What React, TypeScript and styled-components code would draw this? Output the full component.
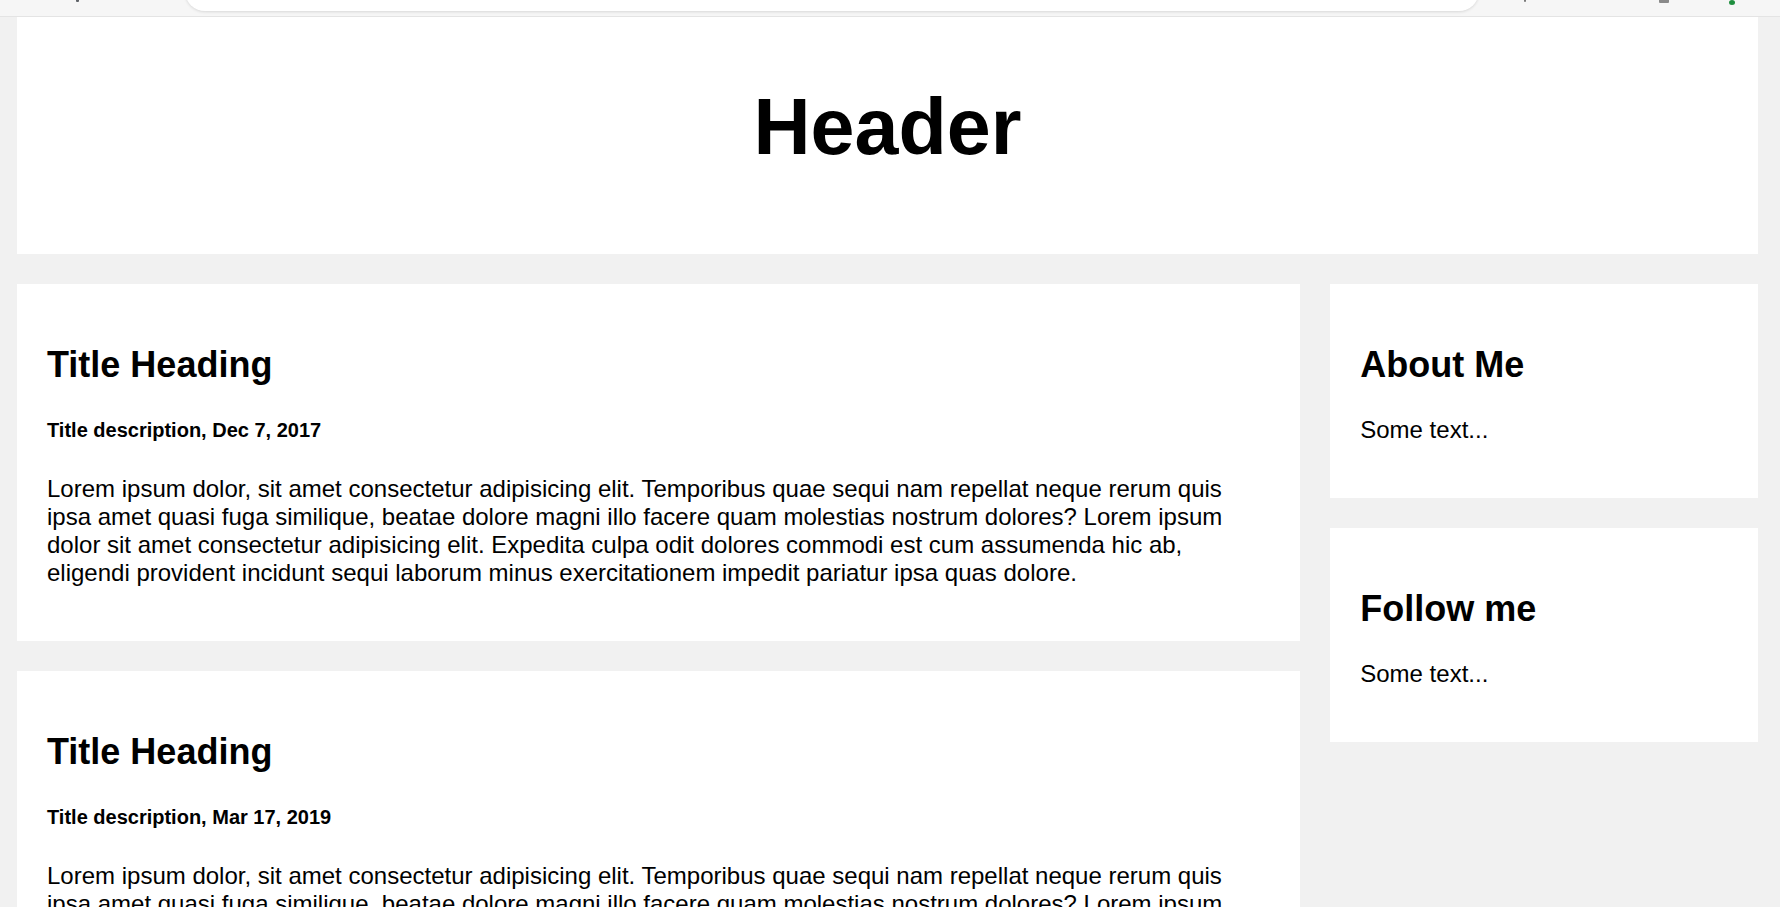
import React from "react";
import styled, { createGlobalStyle } from "styled-components";

const GlobalStyle = createGlobalStyle`
  html, body {
    margin: 0;
    padding: 0;
    background: #f1f1f1;
    font-family: "Liberation Sans", Arial, Helvetica, sans-serif;
    font-size: 24px;
    color: #000;
  }
  * { box-sizing: border-box; }
`;

const BrowserStrip = styled.div`
  height: 17px;
  background: #f6f6f6;
  border-bottom: 1px solid #e4e4e4;
  overflow: hidden;
  display: flex;
  align-items: flex-end;
  padding: 0 0 5px 0;
`;

const Mark = styled.span<{ $w: number; $h: number; $color: string; $left: number; $round?: boolean }>`
  flex: none;
  align-self: flex-start;
  width: ${(p) => p.$w}px;
  height: ${(p) => p.$h}px;
  margin-left: ${(p) => p.$left}px;
  background: ${(p) => p.$color};
  border-radius: ${(p) => (p.$round ? "50%" : "0 0 1px 1px")};
`;

const AddressBar = styled.div`
  flex: none;
  width: 1294px;
  height: 40px;
  margin-left: 106px;
  background: #fff;
  border-radius: 20px;
  box-shadow: 0 1px 3px rgba(0, 0, 0, 0.12);
  display: flex;
  align-items: flex-end;
  padding: 0 0 7px 10px;
`;

const Page = styled.div`
  padding: 0 22px 0 17px;
`;

const Header = styled.header`
  background: #fff;
  text-align: center;
  padding: 64px 20px 81px;
`;

const HeaderTitle = styled.h1`
  margin: 0;
  font-size: 79px;
  font-weight: 700;
  line-height: normal;
`;

const Row = styled.div`
  display: grid;
  grid-template-columns: 3fr 1fr;
  column-gap: 30px;
  align-items: start;
  margin-top: 30px;
`;

const Column = styled.div`
  display: flex;
  flex-direction: column;
  gap: 30px;
`;

const Card = styled.section`
  background: #fff;
  padding: 30px;
  display: flow-root;
`;

const CardTitle = styled.h2`
  font-size: 36px;
  font-weight: 700;
  margin: 30px 0;
  line-height: normal;
`;

const CardMeta = styled.h5`
  font-size: 20px;
  font-weight: 700;
  margin: 33px 0;
  line-height: normal;
`;

const CardText = styled.p`
  margin: 24px 0;
  font-size: 24px;
  line-height: normal;
`;

const LOREM =
  "Lorem ipsum dolor, sit amet consectetur adipisicing elit. Temporibus quae sequi nam repellat neque rerum quis ipsa amet quasi fuga similique, beatae dolore magni illo facere quam molestias nostrum dolores? Lorem ipsum dolor sit amet consectetur adipisicing elit. Expedita culpa odit dolores commodi est cum assumenda hic ab, eligendi provident incidunt sequi laborum minus exercitationem impedit pariatur ipsa quas dolore.";

const posts = [
  { title: "Title Heading", meta: "Title description, Dec 7, 2017", text: LOREM },
  { title: "Title Heading", meta: "Title description, Mar 17, 2019", text: LOREM },
];

const side = [
  { title: "About Me", text: "Some text..." },
  { title: "Follow me", text: "Some text..." },
];

export default function App() {
  return (
    <>
      <GlobalStyle />
      <BrowserStrip>
        <Mark $w={3} $h={2} $color="#5f6368" $left={76} />
        <AddressBar>
          <Mark $w={3} $h={2} $color="#9aa0a6" $left={0} />
        </AddressBar>
        <Mark $w={2} $h={2} $color="#7a7a7a" $left={45} />
        <Mark $w={10} $h={3} $color="#8a8a8a" $left={133} />
        <Mark $w={6} $h={5} $color="#1e8e3e" $left={60} $round />
      </BrowserStrip>
      <Page>
        <Header>
          <HeaderTitle>Header</HeaderTitle>
        </Header>
        <Row>
          <Column>
            {posts.map((p, i) => (
              <Card key={i}>
                <CardTitle>{p.title}</CardTitle>
                <CardMeta>{p.meta}</CardMeta>
                <CardText>{p.text}</CardText>
              </Card>
            ))}
          </Column>
          <Column>
            {side.map((s, i) => (
              <Card key={i}>
                <CardTitle>{s.title}</CardTitle>
                <CardText>{s.text}</CardText>
              </Card>
            ))}
          </Column>
        </Row>
      </Page>
    </>
  );
}
